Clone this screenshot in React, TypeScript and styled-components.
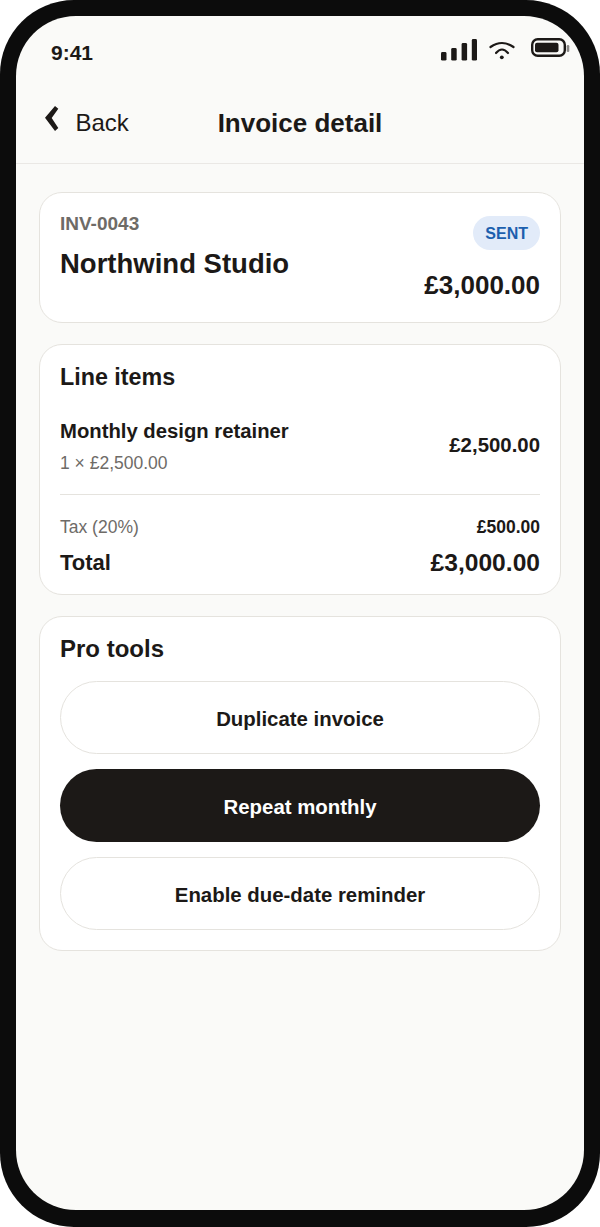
import * as React from 'react'
import styled, { createGlobalStyle } from 'styled-components'

const GlobalStyle = createGlobalStyle`
  html, body { margin: 0; padding: 0; background: #fff; }
  body { font-family: "Liberation Sans", Arial, sans-serif; color: #1c1917; }
  * { box-sizing: border-box; }
`

const Phone = styled.div`
  width: 600px;
  height: 1227px;
  background: #0c0c0c;
  border-radius: 74px;
  padding: 16px 16px 17px;
`

const Screen = styled.div`
  height: 100%;
  background: #fafaf8;
  border-radius: 60px;
  display: flex;
  flex-direction: column;
  overflow: hidden;
`

const StatusBar = styled.div`
  height: 62px;
  padding: 0 14px 0 35px;
  display: flex;
  align-items: center;
  justify-content: space-between;
`

const Time = styled.span`
  font-size: 21px;
  font-weight: 700;
  margin-top: 12px;
  color: #1c1917;
`

const StatusIcons = styled.div`
  display: flex;
  align-items: center;
  gap: 12px;
  margin-top: 4px;
`

const BatterySvg = styled.svg`
  margin-left: 4px;
`

const Header = styled.header`
  height: 86px;
  border-bottom: 1.5px solid #eae8e5;
  padding: 5px 28px 0 29px;
  display: flex;
  align-items: center;
  position: relative;
`

const BackLink = styled.div`
  display: flex;
  align-items: center;
  gap: 16.5px;
  font-size: 24px;
  color: #1c1917;
`

const ChevronSvg = styled.svg`
  margin-bottom: 9px;
`

const Title = styled.h1`
  position: absolute;
  left: 0;
  right: 0;
  margin: 0;
  text-align: center;
  font-size: 26px;
  font-weight: 700;
`

const Content = styled.main`
  padding: 27.5px 23px 0;
  display: flex;
  flex-direction: column;
  gap: 21px;
`

const Card = styled.section`
  background: #fff;
  border: 1.5px solid #e5e3de;
  border-radius: 23px;
  padding: 0 20px;
`

const SummaryCard = styled(Card)`
  height: 131px;
  display: flex;
  justify-content: space-between;
  padding-top: 19px;
`

const SummaryRight = styled.div`
  display: flex;
  flex-direction: column;
  align-items: flex-end;
  gap: 20px;
`

const InvoiceNo = styled.div`
  font-size: 19px;
  font-weight: 700;
  color: #6e6b67;
  line-height: 23px;
`

const Client = styled.div`
  font-size: 27.5px;
  font-weight: 700;
  line-height: 32px;
  margin-top: 13px;
`

const Badge = styled.span`
  background: #e2ebf9;
  color: #1c5fae;
  font-size: 16px;
  font-weight: 700;
  height: 34px;
  padding: 2px 12px 0;
  border-radius: 17px;
  display: flex;
  align-items: center;
  margin-top: 4px;
`

const Amount = styled.div<{ $size: number }>`
  font-size: ${p => p.$size}px;
  font-weight: 700;
  color: #1c1917;
`

const ItemAmount = styled(Amount)`
  margin-bottom: 1px;
`

const CardTitle = styled.h2<{ $size: number }>`
  margin: 0;
  font-size: ${p => p.$size}px;
  font-weight: 700;
  line-height: 28px;
`

const ItemsCard = styled(Card)`
  height: 251px;
  padding-top: 18px;
`

const ItemRow = styled.div`
  display: flex;
  justify-content: space-between;
  align-items: center;
  margin-top: 28px;
  padding-bottom: 20px;
  border-bottom: 1.5px solid #e5e3de;
`

const ItemName = styled.div`
  font-size: 20.3px;
  font-weight: 700;
  line-height: 24px;
`

const ItemMeta = styled.div`
  font-size: 17.5px;
  color: #6e6b67;
  line-height: 21px;
  margin-top: 10px;
`

const TotalRow = styled.div<{ $top: number }>`
  display: flex;
  justify-content: space-between;
  align-items: center;
  margin-top: ${p => p.$top}px;
`

const TaxLabel = styled.span`
  font-size: 17.5px;
  color: #6e6b67;
`

const TotalLabel = styled.span`
  font-size: 22px;
  font-weight: 700;
`

const ToolsCard = styled(Card)`
  height: 335px;
  padding-top: 18px;
`

const ToolsList = styled.div`
  display: flex;
  flex-direction: column;
  gap: 15px;
  margin-top: 18px;
`

const ToolButton = styled.button<{ $active?: boolean }>`
  height: 73px;
  border-radius: 36.5px;
  border: ${p => (p.$active ? 'none' : '1.5px solid #e5e3de')};
  background: ${p => (p.$active ? '#1c1917' : '#fff')};
  color: ${p => (p.$active ? '#fff' : '#1c1917')};
  font-family: inherit;
  font-size: 20.4px;
  font-weight: 700;
  padding: 5px 0 0;
`

const tools = [
  { label: 'Duplicate invoice' },
  { label: 'Repeat monthly', active: true },
  { label: 'Enable due-date reminder' },
]

const SignalIcon = () => (
  <svg width="36" height="24" viewBox="0 0 36 24" fill="#1c1917">
    <rect x="0" y="15" width="5.5" height="8.6" rx="1.4" />
    <rect x="10.2" y="11" width="5.5" height="12.6" rx="1.4" />
    <rect x="20.6" y="6" width="5.5" height="17.6" rx="1.4" />
    <rect x="30.8" y="2" width="5.2" height="21.6" rx="1.4" />
  </svg>
)

const WifiIcon = () => (
  <svg width="26" height="24" viewBox="0 0 26 24" fill="none" stroke="#1c1917" strokeWidth="2.2" strokeLinecap="round">
    <path d="M1.5 10Q13 2 24.5 10" />
    <path d="M7 16Q13 9 19 16" />
    <circle cx="12.8" cy="20.3" r="1.9" fill="#1c1917" stroke="none" />
  </svg>
)

const BatteryIcon = () => (
  <BatterySvg width="39" height="24" viewBox="0 0 39 24">
    <rect x="1.2" y="2.2" width="32.6" height="16.6" rx="5.5" fill="none" stroke="#1c1917" strokeWidth="2.4" />
    <rect x="4" y="5.7" width="23.5" height="9.6" rx="2" fill="#1c1917" />
    <rect x="35.7" y="8" width="2.6" height="7" rx="1.2" fill="#8a8886" />
  </BatterySvg>
)

const BackChevron = () => (
  <ChevronSvg width="14" height="25" viewBox="0 0 14 25" fill="#1c1917">
    <path d="M10 0 13.3 2.7 6.7 12 13.3 22 10 25 0 11.7Z" />
  </ChevronSvg>
)

export default function App() {
  return (
    <Phone>
      <GlobalStyle />
      <Screen>
        <StatusBar>
          <Time>9:41</Time>
          <StatusIcons>
            <SignalIcon />
            <WifiIcon />
            <BatteryIcon />
          </StatusIcons>
        </StatusBar>
        <Header>
          <BackLink>
            <BackChevron />
            Back
          </BackLink>
          <Title>Invoice detail</Title>
        </Header>
        <Content>
          <SummaryCard>
            <div>
              <InvoiceNo>INV-0043</InvoiceNo>
              <Client>Northwind Studio</Client>
            </div>
            <SummaryRight>
              <Badge>SENT</Badge>
              <Amount $size={26}>£3,000.00</Amount>
            </SummaryRight>
          </SummaryCard>
          <ItemsCard>
            <CardTitle $size={23.3}>Line items</CardTitle>
            <ItemRow>
              <div>
                <ItemName>Monthly design retainer</ItemName>
                <ItemMeta>1 × £2,500.00</ItemMeta>
              </div>
              <ItemAmount $size={20.4}>£2,500.00</ItemAmount>
            </ItemRow>
            <TotalRow $top={22}>
              <TaxLabel>Tax (20%)</TaxLabel>
              <Amount $size={17.5}>£500.00</Amount>
            </TotalRow>
            <TotalRow $top={11}>
              <TotalLabel>Total</TotalLabel>
              <Amount $size={24.6}>£3,000.00</Amount>
            </TotalRow>
          </ItemsCard>
          <ToolsCard>
            <CardTitle $size={24}>Pro tools</CardTitle>
            <ToolsList>
              {tools.map(t => (
                <ToolButton key={t.label} $active={t.active}>
                  {t.label}
                </ToolButton>
              ))}
            </ToolsList>
          </ToolsCard>
        </Content>
      </Screen>
    </Phone>
  )
}
